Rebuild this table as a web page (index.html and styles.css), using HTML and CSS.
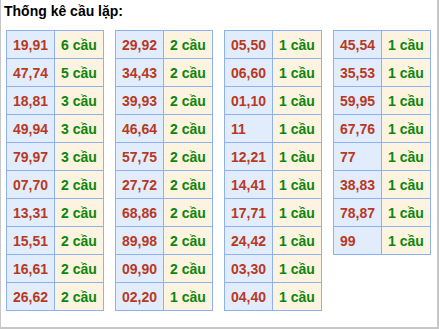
FILE: index.html
```html
<!DOCTYPE html>
<html lang="vi">
<head>
<meta charset="utf-8">
<link rel="stylesheet" href="styles.css">
</head>
<body>
<div class="box">
  <div class="title">Thống kê cầu lặp:</div>
  <div class="tables">
    <div class="tbl">
      <div class="n">19,91</div><div class="c">6 cầu</div>
      <div class="n">47,74</div><div class="c">5 cầu</div>
      <div class="n">18,81</div><div class="c">3 cầu</div>
      <div class="n">49,94</div><div class="c">3 cầu</div>
      <div class="n">79,97</div><div class="c">3 cầu</div>
      <div class="n">07,70</div><div class="c">2 cầu</div>
      <div class="n">13,31</div><div class="c">2 cầu</div>
      <div class="n">15,51</div><div class="c">2 cầu</div>
      <div class="n">16,61</div><div class="c">2 cầu</div>
      <div class="n">26,62</div><div class="c">2 cầu</div>
    </div>
    <div class="tbl">
      <div class="n">29,92</div><div class="c">2 cầu</div>
      <div class="n">34,43</div><div class="c">2 cầu</div>
      <div class="n">39,93</div><div class="c">2 cầu</div>
      <div class="n">46,64</div><div class="c">2 cầu</div>
      <div class="n">57,75</div><div class="c">2 cầu</div>
      <div class="n">27,72</div><div class="c">2 cầu</div>
      <div class="n">68,86</div><div class="c">2 cầu</div>
      <div class="n">89,98</div><div class="c">2 cầu</div>
      <div class="n">09,90</div><div class="c">2 cầu</div>
      <div class="n">02,20</div><div class="c">1 cầu</div>
    </div>
    <div class="tbl">
      <div class="n">05,50</div><div class="c">1 cầu</div>
      <div class="n">06,60</div><div class="c">1 cầu</div>
      <div class="n">01,10</div><div class="c">1 cầu</div>
      <div class="n">11</div><div class="c">1 cầu</div>
      <div class="n">12,21</div><div class="c">1 cầu</div>
      <div class="n">14,41</div><div class="c">1 cầu</div>
      <div class="n">17,71</div><div class="c">1 cầu</div>
      <div class="n">24,42</div><div class="c">1 cầu</div>
      <div class="n">03,30</div><div class="c">1 cầu</div>
      <div class="n">04,40</div><div class="c">1 cầu</div>
    </div>
    <div class="tbl">
      <div class="n">45,54</div><div class="c">1 cầu</div>
      <div class="n">35,53</div><div class="c">1 cầu</div>
      <div class="n">59,95</div><div class="c">1 cầu</div>
      <div class="n">67,76</div><div class="c">1 cầu</div>
      <div class="n">77</div><div class="c">1 cầu</div>
      <div class="n">38,83</div><div class="c">1 cầu</div>
      <div class="n">78,87</div><div class="c">1 cầu</div>
      <div class="n">99</div><div class="c">1 cầu</div>
    </div>
  </div>
</div>
</body>
</html>
```
FILE: styles.css
```css
html, body {
  margin: 0;
  padding: 0;
  background: #fff;
}
.box {
  box-sizing: border-box;
  width: 439px;
  height: 329px;
  border-left: 1px solid #c6c6c6;
  border-right: 2px solid #c6c6c6;
  border-bottom: 2px solid #c6c6c6;
  font-family: "Liberation Sans", Arial, sans-serif;
}
.title {
  font-size: 14px;
  font-weight: bold;
  line-height: 16px;
  color: #000;
  padding: 3px 0 0 3px;
  margin-bottom: 11px;
}
.tables {
  display: flex;
  align-items: flex-start;
  gap: 11px;
  padding-left: 5px;
}
.tbl {
  display: grid;
  grid-template-columns: 48px 49px;
  grid-auto-rows: 28px;
  border-left: 1px solid #8eb1ef;
  border-top: 1px solid #8eb1ef;
}
.tbl > div {
  box-sizing: border-box;
  border-right: 1px solid #8eb1ef;
  border-bottom: 1px solid #8eb1ef;
  font-size: 14px;
  font-weight: bold;
  line-height: 16px;
  display: flex;
  align-items: center;
  padding-left: 6px;
  padding-top: 1px;
  white-space: nowrap;
}
.n {
  background: #e1edfc;
  color: #b8391f;
}
.c {
  background: #fdf3e1;
  color: #0b870b;
}
```
